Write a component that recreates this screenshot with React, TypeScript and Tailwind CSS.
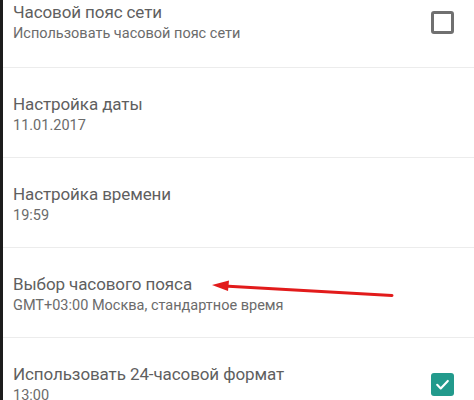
import React from 'react'

interface Setting {
  title: string
  summary: string
  checkbox?: 'on' | 'off'
}

const settings: Setting[] = [
  { title: 'Часовой пояс сети', summary: 'Использовать часовой пояс сети', checkbox: 'off' },
  { title: 'Настройка даты', summary: '11.01.2017' },
  { title: 'Настройка времени', summary: '19:59' },
  { title: 'Выбор часового пояса', summary: 'GMT+03:00 Москва, стандартное время' },
  { title: 'Использовать 24-часовой формат', summary: '13:00', checkbox: 'on' },
]

function Checkbox({ checked }: { checked: boolean }) {
  if (checked) {
    return (
      <div className="w-[23px] h-[23px] rounded-[3px] bg-[#229a8c] flex items-center justify-center">
        <svg width="17" height="17" viewBox="0 0 24 24" fill="none">
          <path d="M4.5 12.5l5 5 10-10.5" stroke="#fff" strokeWidth="3" strokeLinecap="round" strokeLinejoin="round" />
        </svg>
      </div>
    )
  }
  return <div className="w-[23px] h-[23px] rounded-[3px] border-[3px] border-[#707070]" />
}

function Row({ item, first }: { item: Setting; first: boolean }) {
  return (
    <div
      className={
        first
          ? 'shrink-0 flex items-start h-[67px] pl-[10px] pr-[20px]'
          : 'shrink-0 flex items-start h-[90px] pt-[24px] pl-[10px] pr-[20px] border-t border-[#ececec]'
      }
    >
      <div className="flex-1 min-w-0">
        <div className="text-[17px] leading-[24px] tracking-[-0.1px] text-[#5f5f5f]">{item.title}</div>
        <div className="text-[14.5px] leading-[20px] text-[#6b6b6b]">{item.summary}</div>
      </div>
      {item.checkbox && (
        <div className="h-[44px] flex items-center">
          <Checkbox checked={item.checkbox === 'on'} />
        </div>
      )}
    </div>
  )
}

export default function App() {
  return (
    <div
      className="relative w-[474px] h-[400px] overflow-hidden bg-white flex"
      style={{ fontFamily: 'Roboto, "Noto Sans", sans-serif' }}
    >
      <div className="w-[3px] bg-[#1c1c1c] shrink-0" />
      <div className="flex-1 flex flex-col">
        {settings.map((s, i) => (
          <Row key={s.title} item={s} first={i === 0} />
        ))}
      </div>

      {/* red arrow pointing at the timezone row */}
      <svg className="absolute left-0 top-0 pointer-events-none" width="474" height="400">
        <line x1="392" y1="295.5" x2="224" y2="286" stroke="#e21b1b" strokeWidth="3" strokeLinecap="round" />
        <polygon points="212,285 229,280.5 228,291" fill="#e21b1b" />
      </svg>
    </div>
  )
}
